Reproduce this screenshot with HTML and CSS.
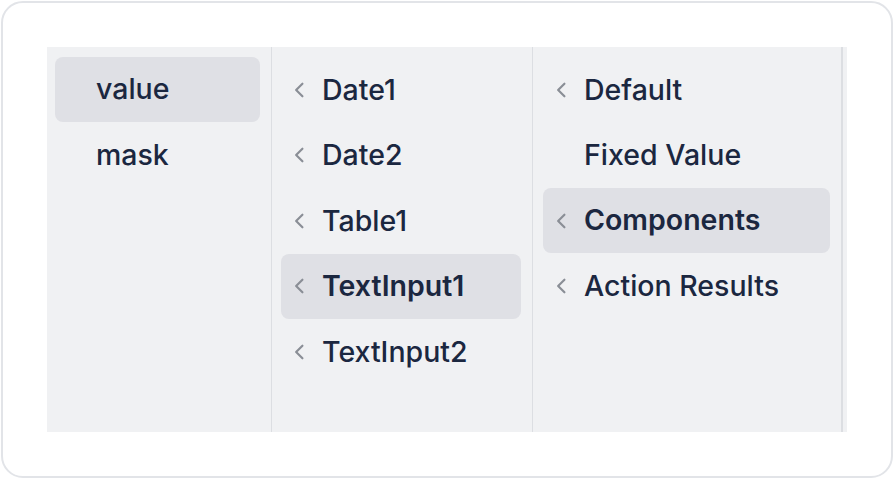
FILE: index.html
```html
<!DOCTYPE html>
<html>
<head>
<meta charset="utf-8">
<link rel="stylesheet" href="styles.css">
</head>
<body>
<div class="card">
  <div class="panel">
    <div class="col col1">
      <div class="item selected"><span class="chev"></span><span class="label">value</span></div>
      <div class="item"><span class="chev"></span><span class="label">mask</span></div>
    </div>
    <div class="col col2">
      <div class="item"><span class="chev"><svg viewBox="0 0 10 14"><path d="M8 1.5 L2.5 7 L8 12.5"/></svg></span><span class="label">Date1</span></div>
      <div class="item"><span class="chev"><svg viewBox="0 0 10 14"><path d="M8 1.5 L2.5 7 L8 12.5"/></svg></span><span class="label">Date2</span></div>
      <div class="item"><span class="chev"><svg viewBox="0 0 10 14"><path d="M8 1.5 L2.5 7 L8 12.5"/></svg></span><span class="label">Table1</span></div>
      <div class="item selected strong"><span class="chev"><svg viewBox="0 0 10 14"><path d="M8 1.5 L2.5 7 L8 12.5"/></svg></span><span class="label">TextInput1</span></div>
      <div class="item"><span class="chev"><svg viewBox="0 0 10 14"><path d="M8 1.5 L2.5 7 L8 12.5"/></svg></span><span class="label">TextInput2</span></div>
    </div>
    <div class="col col3">
      <div class="item"><span class="chev"><svg viewBox="0 0 10 14"><path d="M8 1.5 L2.5 7 L8 12.5"/></svg></span><span class="label">Default</span></div>
      <div class="item"><span class="chev"></span><span class="label">Fixed Value</span></div>
      <div class="item selected strong"><span class="chev"><svg viewBox="0 0 10 14"><path d="M8 1.5 L2.5 7 L8 12.5"/></svg></span><span class="label">Components</span></div>
      <div class="item"><span class="chev"><svg viewBox="0 0 10 14"><path d="M8 1.5 L2.5 7 L8 12.5"/></svg></span><span class="label">Action Results</span></div>
    </div>
    <div class="col col4"></div>
  </div>
</div>
</body>
</html>
```

FILE: styles.css
```css
html, body {
  margin: 0;
  padding: 0;
  background: #ffffff;
}
body {
  font-family: Inter, "Noto Sans", sans-serif;
  color: #1b2740;
}
.card {
  box-sizing: border-box;
  margin: 1px;
  width: 892px;
  height: 477px;
  border: 2px solid #e2e4e8;
  border-radius: 22px;
  padding: 44px;
  background: #fff;
}
.panel {
  display: flex;
  height: 385px;
  width: 800px;
  background: #f0f1f3;
}
.col {
  box-sizing: border-box;
  padding: 10px 11px 0 8px;
  display: flex;
  flex-direction: column;
  border-right: 1px solid #dcdee2;
}
.col1 { width: 225px; }
.col2 { width: 261px; padding-left: 9px; }
.col3 { width: 310px; padding-left: 10px; border-right-width: 2px; }
.col4 { width: 4px; padding: 0; border: none; }
.item {
  display: flex;
  align-items: center;
  height: 65.5px;
  border-radius: 8px;
  font-size: 28.5px;
  font-weight: 500;
  flex: none;
}
.item.selected {
  background: #dfe0e5;
  height: 65px;
  margin-bottom: 0.5px;
}
.item.strong { font-weight: 600; }
.chev {
  width: 41px;
  flex: none;
  display: flex;
  align-items: center;
  padding-left: 12px;
  box-sizing: border-box;
}
.chev svg {
  width: 12px;
  height: 16px;
  fill: none;
  stroke: #8a8e96;
  stroke-width: 1.9;
  stroke-linecap: round;
  stroke-linejoin: round;
}
.label {
  line-height: 1;
  white-space: nowrap;
}
```
